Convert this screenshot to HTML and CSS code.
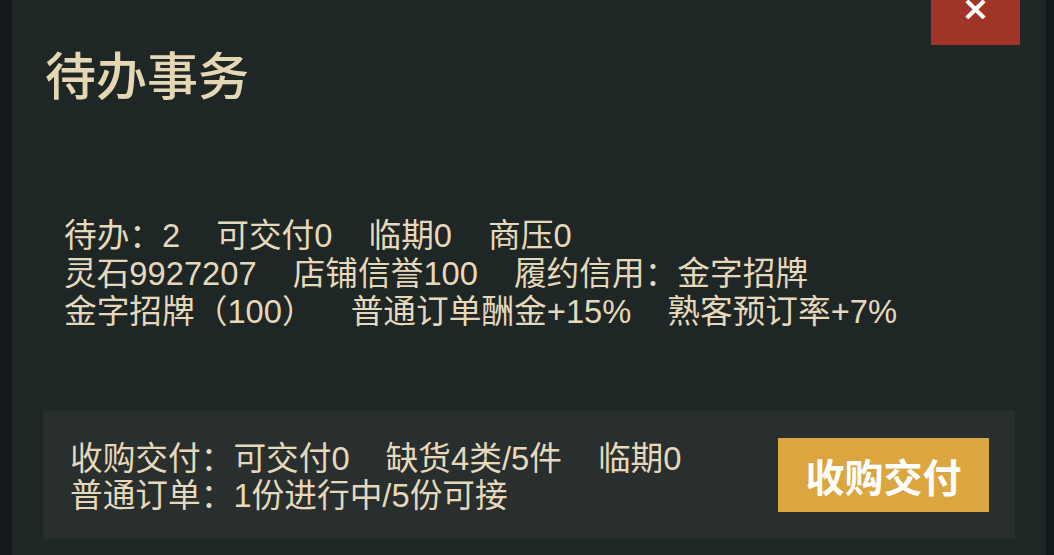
FILE: index.html
```html
<!DOCTYPE html>
<html lang="zh-CN">
<head>
<meta charset="utf-8">
<link rel="stylesheet" href="styles.css">
</head>
<body>
<div class="panel">
  <button class="close" type="button">×</button>
  <h1 class="title">待办事务</h1>
  <div class="info">
    <div class="row"><span>待办：2</span><span>可交付0</span><span>临期0</span><span>商压0</span></div>
    <div class="row"><span>灵石9927207</span><span>店铺信誉100</span><span>履约信用：金字招牌</span></div>
    <div class="row"><span>金字招牌（100）</span><span>普通订单酬金+15%</span><span>熟客预订率+7%</span></div>
  </div>
  <div class="task">
    <div class="task-text">
      <div class="row"><span>收购交付：可交付0</span><span>缺货4类/5件</span><span>临期0</span></div>
      <div class="row"><span>普通订单：1份进行中/5份可接</span></div>
    </div>
    <button class="action" type="button">收购交付</button>
  </div>
</div>
</body>
</html>
```
FILE: styles.css
```css
html, body {
  margin: 0;
  padding: 0;
  height: 100%;
}
body {
  background: #141a1b;
  padding: 0 8px 0 12px;
  box-sizing: border-box;
  overflow: hidden;
  font-family: "Liberation Sans", "Noto Sans CJK SC", sans-serif;
  color: #e6d9bb;
}
.panel {
  position: relative;
  height: 100%;
  background: #1f2626;
  padding: 0 31px 0 31px;
  box-sizing: border-box;
  display: flex;
  flex-direction: column;
}
.close {
  position: absolute;
  top: 0;
  right: 26px;
  width: 89px;
  height: 45px;
  border: 0;
  padding: 0;
  background: #a03427;
  color: #ffffff;
  font-family: "DejaVu Sans", sans-serif;
  font-weight: bold;
  font-size: 34px;
  line-height: 16px;
  display: flex;
  justify-content: center;
  align-items: flex-start;
}
.title {
  margin: 42px 0 0 2px;
  font-family: "Noto Sans CJK SC", sans-serif;
  font-size: 51px;
  font-weight: 500;
  line-height: 62px;
  color: #e6d7b4;
}
.info {
  margin: 113px 0 0 21px;
  font-size: 32.7px;
  line-height: 38px;
}
.row {
  display: flex;
  gap: 36px;
  white-space: nowrap;
}
.task {
  margin-top: 80px;
  height: 128px;
  background: #292e2e;
  display: flex;
  align-items: center;
  justify-content: space-between;
  padding: 0 26px 0 27px;
}
.task-text {
  font-size: 32.7px;
  line-height: 37px;
  padding-top: 3px;
}
.action {
  width: 211px;
  height: 74px;
  border: 0;
  padding: 0;
  background: #dba53f;
  color: #ffffff;
  font-family: "Noto Sans CJK SC", sans-serif;
  font-weight: 700;
  font-size: 39px;
}
```
